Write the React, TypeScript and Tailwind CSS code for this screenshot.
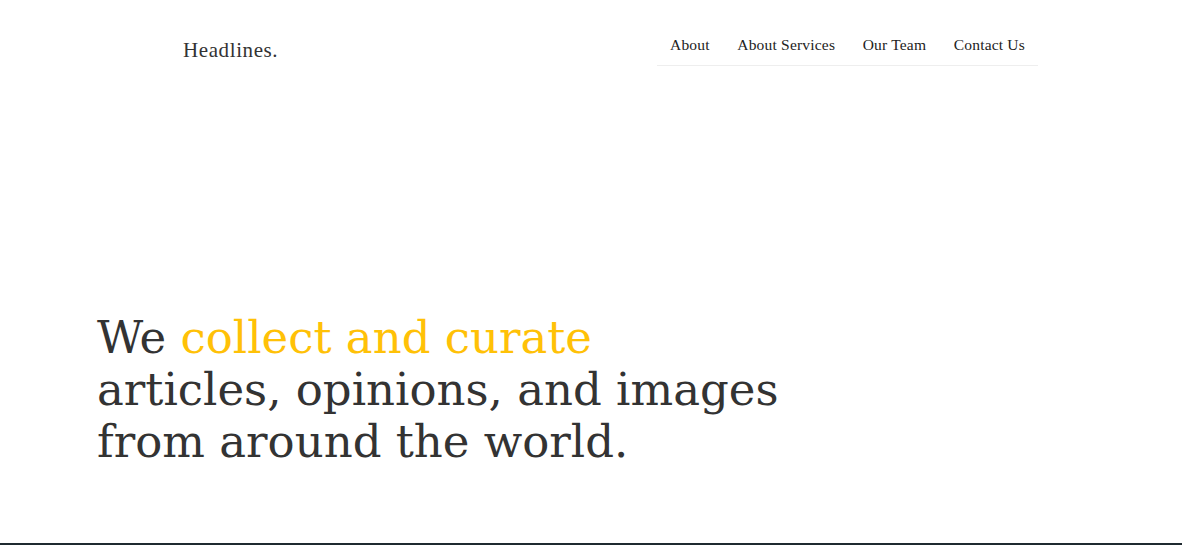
export default function App() {
  const links = ["About", "About Services", "Our Team", "Contact Us"];
  return (
    <div className="min-h-screen bg-white" style={{ fontFamily: '"Liberation Serif", serif' }}>
      <div className="h-[543px] flex flex-col">
        <header className="flex items-start justify-between pl-[183px] pr-[144px] pt-[36px]">
          <a className="text-[21px] leading-none tracking-[0.6px] text-[#333] mt-[4px]">Headlines.</a>
          <nav className="border-b border-[#eeeeee] -mt-[10px]">
            <ul className="flex gap-[27.5px] px-[13px] pt-[8px] pb-[9px]">
              {links.map((l) => (
                <li key={l} className="text-[15.5px] leading-[22px] tracking-[0.2px] text-[#222]">
                  {l}
                </li>
              ))}
            </ul>
          </nav>
        </header>
        <section className="flex-1 flex items-end pl-[97px] pb-[75px]">
          <h1
            className="text-[45px] leading-[52px] text-[#333]"
            style={{ fontFamily: '"DejaVu Serif", serif' }}
          >
            We <span className="text-[#ffc107]">collect and curate</span>
            <br />
            articles, opinions, and images
            <br />
            from around the world.
          </h1>
        </section>
      </div>
      <div className="h-[2px] bg-[#1f2a30]" />
    </div>
  );
}
